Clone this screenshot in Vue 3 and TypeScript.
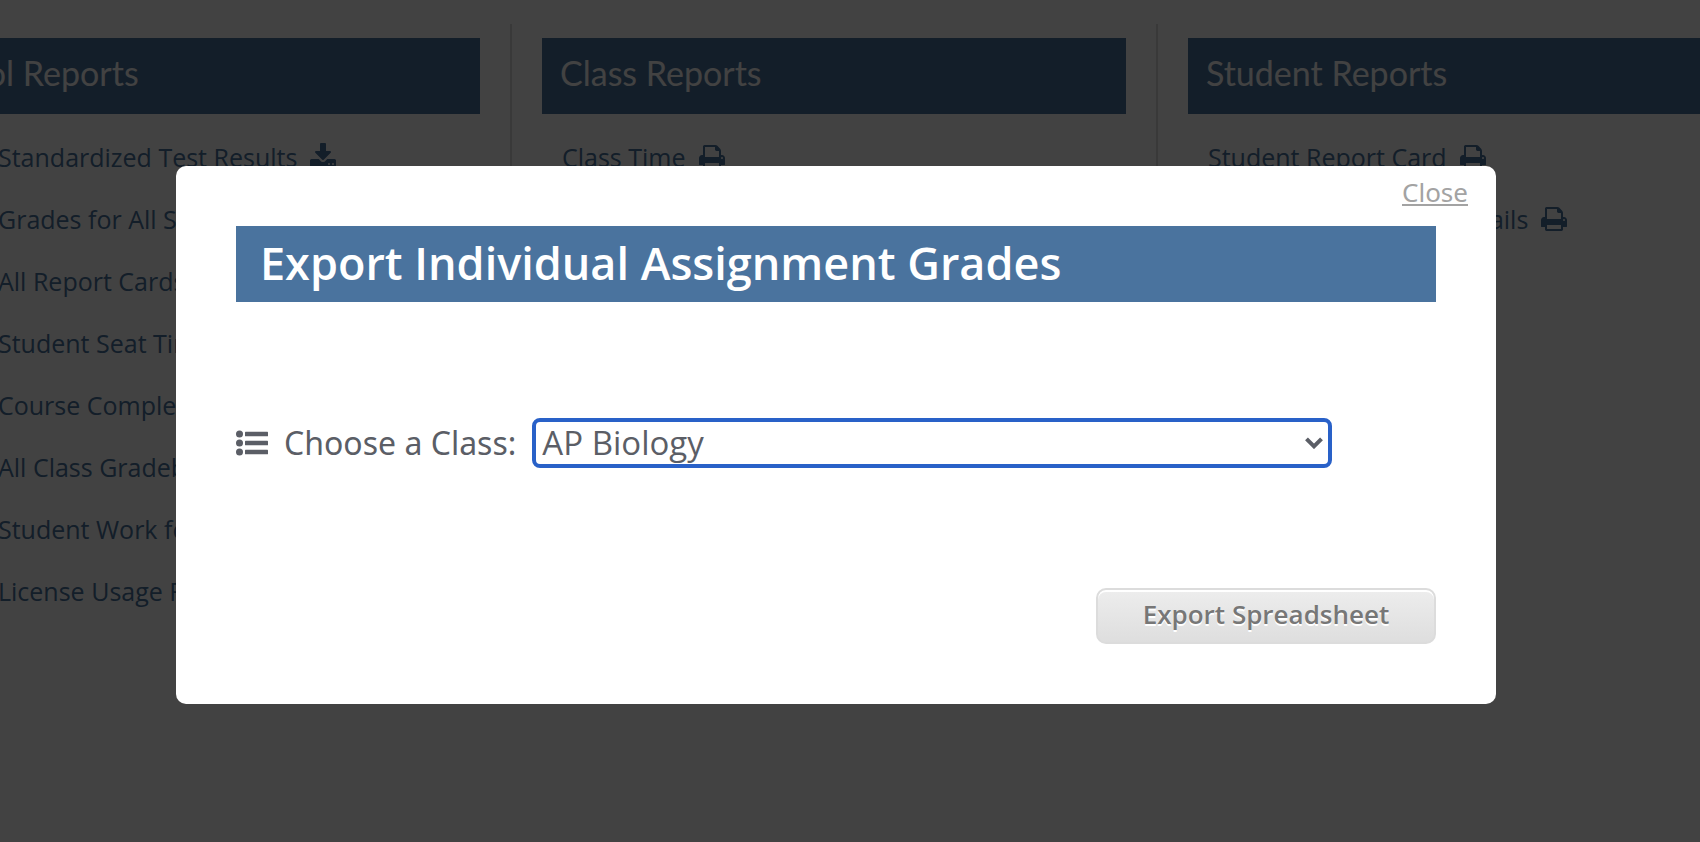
<script setup lang="ts">
import { onMounted, ref } from 'vue'

type IconName = 'download' | 'print'

interface ReportLink {
  label: string
  icon: IconName
}

interface ReportGroup {
  title: string
  indented: boolean
  links: ReportLink[]
}

const groups: ReportGroup[] = [
  {
    title: 'School Reports',
    indented: true,
    links: [
      { label: 'Standardized Test Results', icon: 'download' },
      { label: 'Grades for All Students', icon: 'download' },
      { label: 'All Report Cards', icon: 'print' },
      { label: 'Student Seat Time', icon: 'print' },
      { label: 'Course Completion', icon: 'print' },
      { label: 'All Class Gradebooks', icon: 'print' },
      { label: 'Student Work for Class', icon: 'print' },
      { label: 'License Usage Report', icon: 'print' },
    ],
  },
  {
    title: 'Class Reports',
    indented: false,
    links: [{ label: 'Class Time', icon: 'print' }],
  },
  {
    title: 'Student Reports',
    indented: false,
    links: [
      { label: 'Student Report Card', icon: 'print' },
      { label: 'Student Assignment Details', icon: 'print' },
    ],
  },
]

const iconPaths: Record<IconName, string> = {
  download:
    'M1280 1344q0-26-19-45t-45-19-45 19-19 45 19 45 45 19 45-19 19-45zm256 0q0-26-19-45t-45-19-45 19-19 45 19 45 45 19 45-19 19-45zm128-224v320q0 40-28 68t-68 28h-1472q-40 0-68-28t-28-68v-320q0-40 28-68t68-28h465l135 136q58 56 136 56t136-56l136-136h464q40 0 68 28t28 68zm-325-569q17 41-14 70l-448 448q-18 19-45 19t-45-19l-448-448q-31-29-14-70 17-39 59-39h256v-448q0-26 19-45t45-19h256q26 0 45 19t19 45v448h256q42 0 59 39z',
  print:
    'M384 1536h896v-256h-896v256zM384 896h896v-384h-160q-40 0-68-28t-28-68v-160h-640v640zM1536 960q0-26-19-45t-45-19-45 19-19 45 19 45 45 19 45-19 19-45zM1664 960v416q0 13-9.5 22.5t-22.5 9.5h-224v160q0 40-28 68t-68 28h-960q-40 0-68-28t-28-68v-160h-224q-13 0-22.5-9.5t-9.5-22.5v-416q0-79 56.5-135.5t135.5-56.5h64v-544q0-40 28-68t68-28h672q40 0 88 20t76 48l152 152q28 28 48 76t20 88v256h64q79 0 135.5 56.5t56.5 135.5z',
}

const classes: string[] = ['AP Biology', 'Algebra I', 'World History']
const selected = ref<string>('AP Biology')
const classSelect = ref<HTMLSelectElement | null>(null)

onMounted(() => classSelect.value?.focus())
</script>

<template>
  <div class="page">
    <main class="reports">
      <section v-for="group in groups" :key="group.title" class="group">
        <h2 class="group-title">{{ group.title }}</h2>
        <ul class="links" :class="{ indented: group.indented }">
          <li v-for="link in group.links" :key="link.label">
            <a href="#" class="link">
              {{ link.label }}
              <svg class="link-icon" viewBox="0 0 1664 1792" fill-rule="evenodd" aria-hidden="true">
                <path :d="iconPaths[link.icon]" />
              </svg>
            </a>
          </li>
        </ul>
      </section>
    </main>

    <div class="overlay">
      <div class="dialog" role="dialog" aria-modal="true" aria-labelledby="dialog-title">
        <div class="close-row">
          <a href="#" class="close">Close</a>
        </div>
        <h1 id="dialog-title" class="dialog-title">Export Individual Assignment Grades</h1>
        <div class="field">
          <svg class="list-icon" viewBox="0 0 32 26" aria-hidden="true">
            <circle cx="3.5" cy="4" r="3.5" />
            <circle cx="3.5" cy="13" r="3.5" />
            <circle cx="3.5" cy="22" r="3.5" />
            <rect x="9" y="1.7" width="23" height="4.6" rx="0.6" />
            <rect x="9" y="10.7" width="23" height="4.6" rx="0.6" />
            <rect x="9" y="19.7" width="23" height="4.6" rx="0.6" />
          </svg>
          <label for="class-select">Choose a Class:</label>
          <div class="select-wrap">
            <select id="class-select" ref="classSelect" v-model="selected">
              <option v-for="name in classes" :key="name">{{ name }}</option>
            </select>
            <svg class="chevron" viewBox="0 0 18 12" aria-hidden="true">
              <path d="M1.5 1.8 9 9.3l7.5-7.5" />
            </svg>
          </div>
        </div>
        <div class="actions">
          <button type="button" class="export">Export Spreadsheet</button>
        </div>
      </div>
    </div>
  </div>
</template>

<style>
body {
  margin: 0;
}
</style>

<style scoped>
.page {
  position: relative;
  min-height: 100vh;
  overflow: hidden;
  background: #fff;
  font-family: 'Noto Sans', 'Open Sans', sans-serif;
}

.reports {
  display: grid;
  grid-template-columns: repeat(3, 1fr);
  margin: 0 -102px 0 -136px;
  padding-top: 24px;
}

.group {
  padding: 14px 30px 0;
  border-left: 2px solid #dcdcdc;
}

.group-title {
  margin: 0 0 12px;
  padding: 0 18px 6px;
  background: #4a739e;
  color: #fff;
  font: 400 34px/70px Lato, 'Open Sans', sans-serif;
}

.links {
  margin: 0;
  padding: 0 0 0 20px;
  list-style: none;
}

.links.indented {
  padding-left: 102px;
}

.link {
  display: flex;
  align-items: center;
  gap: 13px;
  color: #4a739e;
  font: 400 25px/62px 'Open Sans', 'Noto Sans', sans-serif;
  text-decoration: none;
  white-space: nowrap;
}

.link-icon {
  width: 26px;
  height: 28px;
  fill: currentColor;
}

.overlay {
  position: absolute;
  inset: 0;
  padding: 166px 204px 0 176px;
  background: rgba(0, 0, 0, 0.74);
}

.dialog {
  padding: 8px 60px 60px;
  border-radius: 10px;
  background: #fff;
  color: #5b5e66;
}

.close-row {
  display: flex;
  justify-content: flex-end;
  margin-right: -32px;
}

.close {
  color: #a3a3a3;
  font-size: 26px;
  line-height: 36px;
}

.dialog-title {
  margin: 16px 0 116px;
  padding: 0 24px 2px;
  background: #4a739e;
  color: #fff;
  font: 600 45px/74px 'Open Sans', 'Noto Sans', sans-serif;
}

.field {
  display: flex;
  align-items: center;
  font-size: 32px;
  line-height: 50px;
}

.list-icon {
  flex: none;
  width: 32px;
  height: 26px;
  margin-right: 16px;
  fill: currentColor;
}

.select-wrap {
  position: relative;
  width: 800px;
  margin-left: 16px;
}

select {
  display: block;
  width: 100%;
  height: 50px;
  padding: 0 40px 0 6px;
  border: 4px solid #2961c8;
  border-radius: 8px;
  outline: none;
  appearance: none;
  background: #fff;
  color: #5b5e66;
  font: 400 33px/42px 'Open Sans', 'Noto Sans', sans-serif;
}

.chevron {
  position: absolute;
  top: 19px;
  right: 9px;
  width: 18px;
  height: 12px;
  fill: none;
  stroke: currentColor;
  stroke-width: 4;
  pointer-events: none;
}

.actions {
  display: flex;
  justify-content: flex-end;
  margin-top: 120px;
}

.export {
  width: 340px;
  height: 56px;
  padding: 0 0 4px;
  border: 2px solid #dcdcdc;
  border-radius: 10px;
  background: linear-gradient(#ededed, #dedede);
  box-shadow: inset 0 2px 0 #fff;
  color: #777;
  font: 600 26px/32px 'Open Sans', 'Noto Sans', sans-serif;
  text-shadow: 0 2px 0 #fff;
}
</style>
